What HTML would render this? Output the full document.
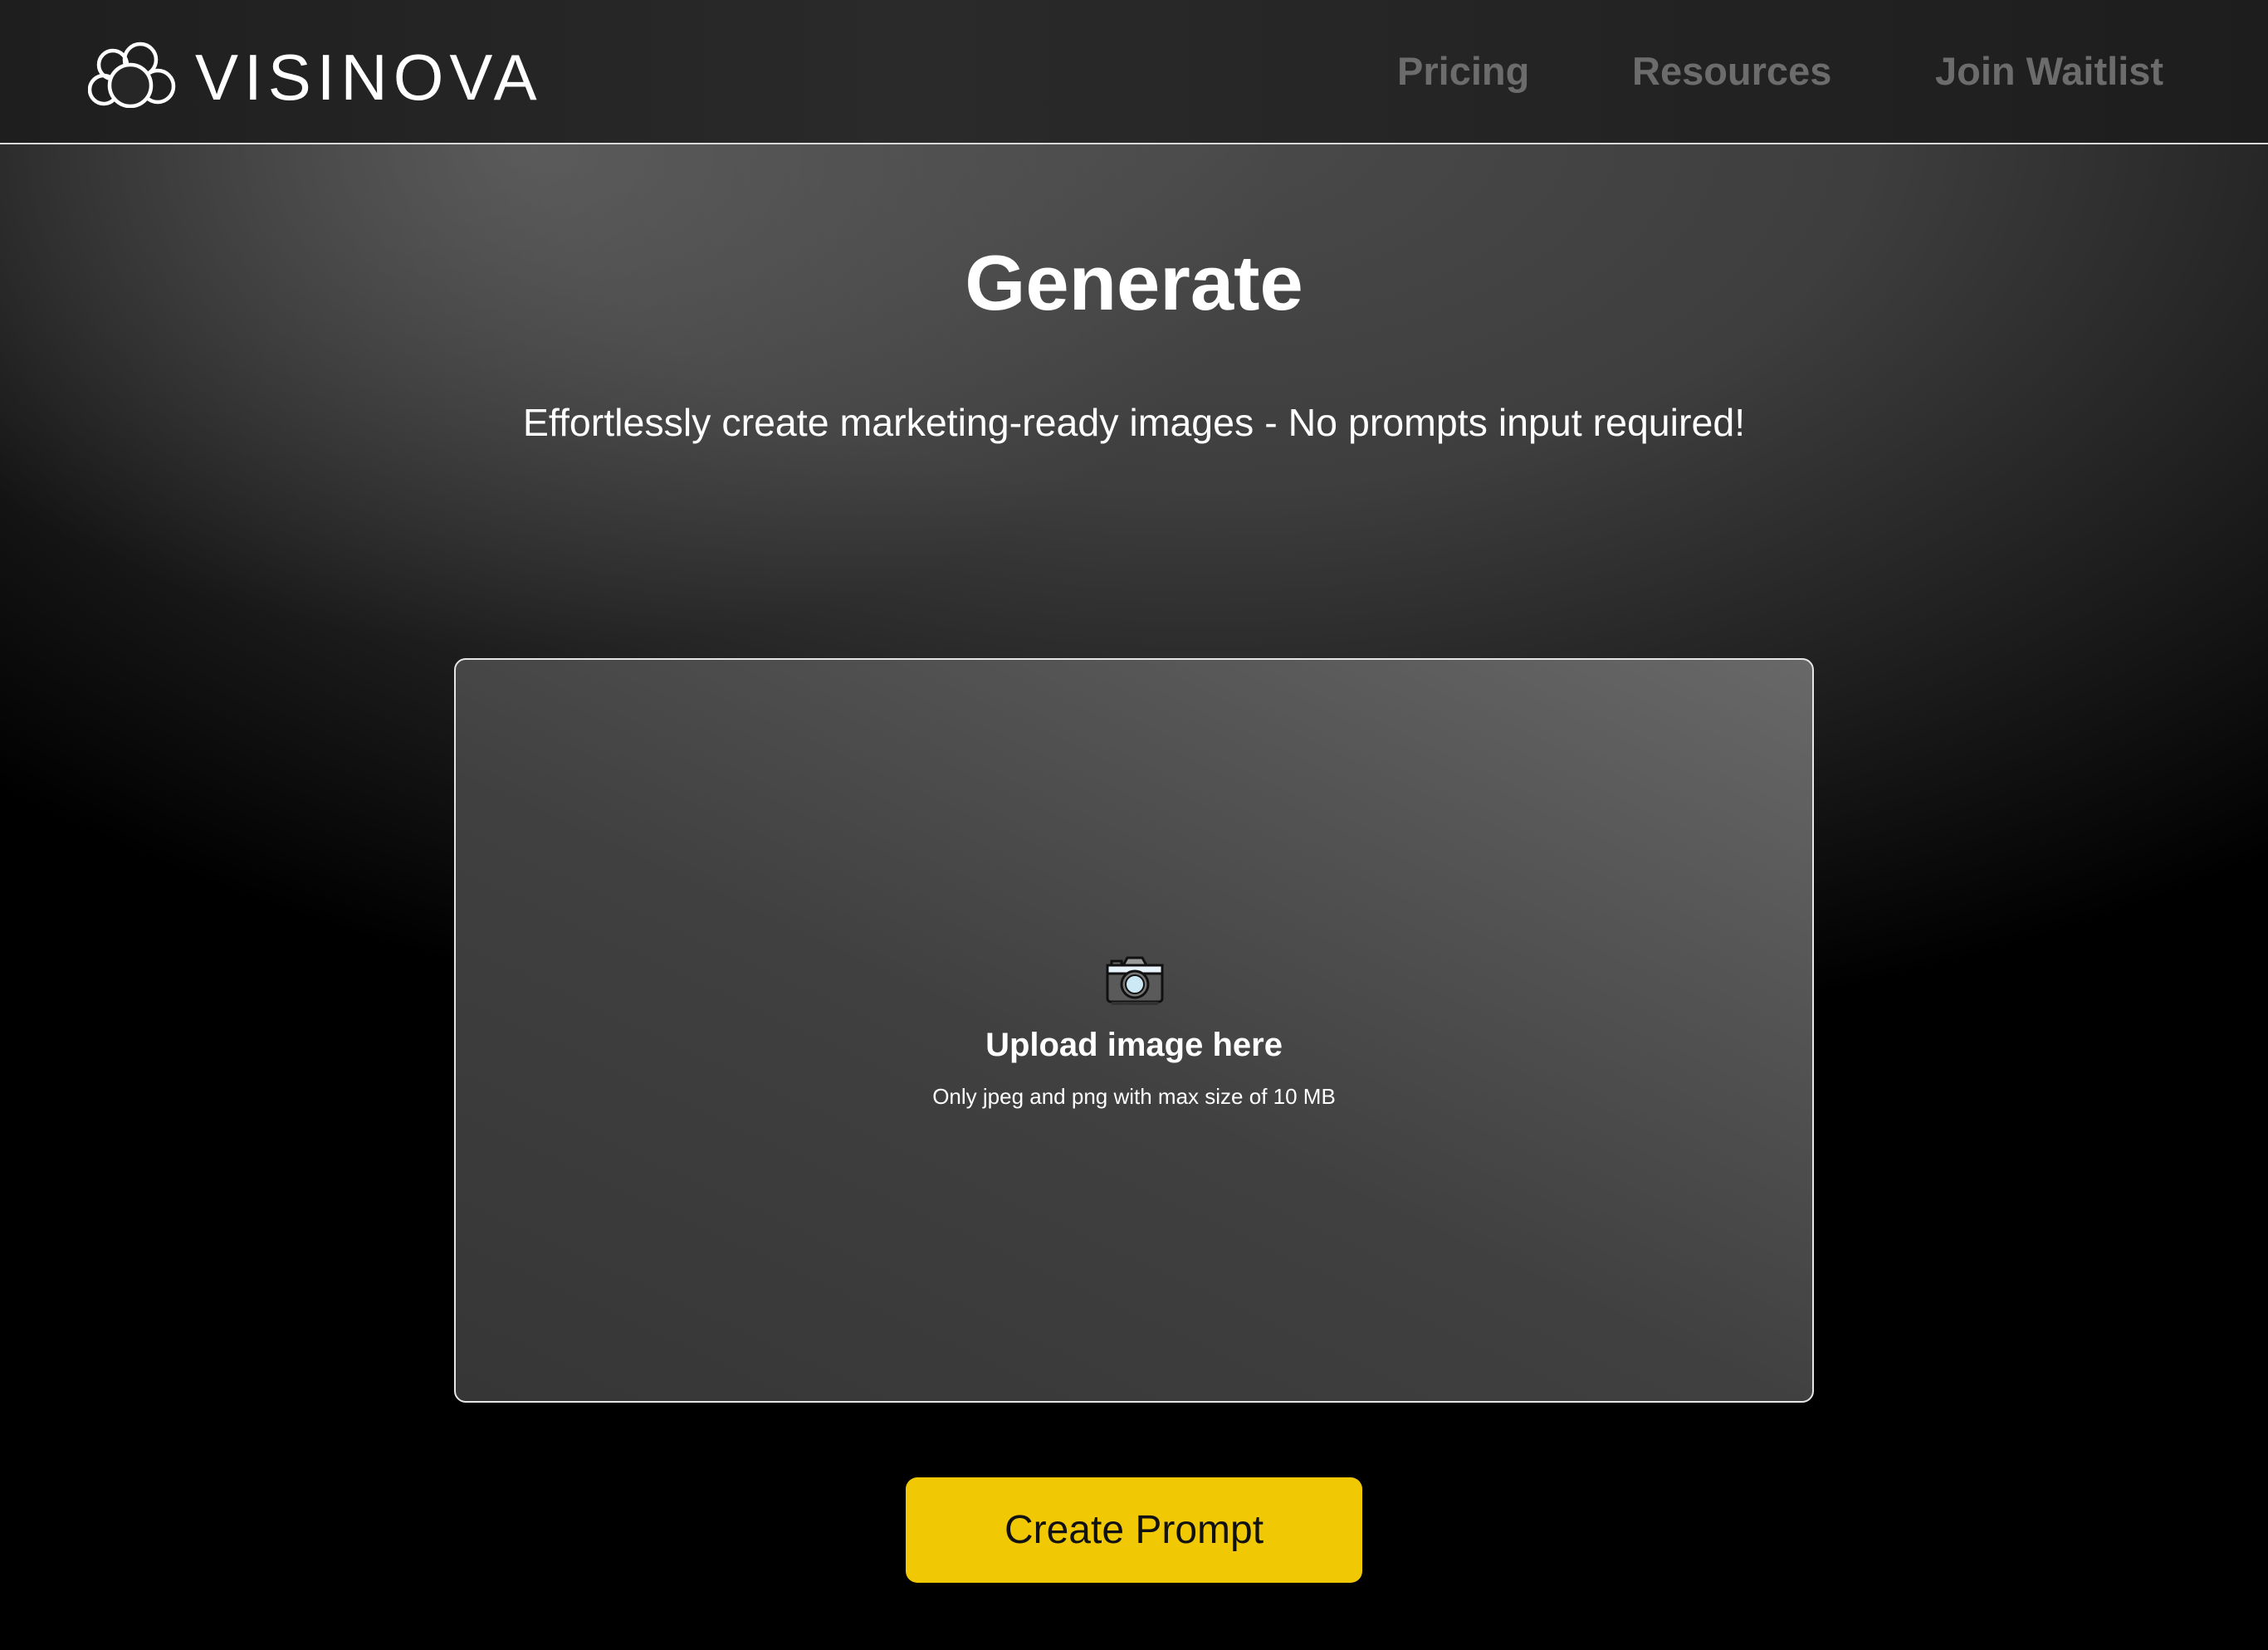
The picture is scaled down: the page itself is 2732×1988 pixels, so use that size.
<!DOCTYPE html>
<html><head><meta charset="utf-8"><style>
html,body{margin:0;padding:0;}
body{width:2732px;height:1988px;position:relative;overflow:hidden;font-family:"Liberation Sans",sans-serif;background:#000;}
.bg1{position:absolute;left:0;top:0;width:2732px;height:1988px;background:radial-gradient(ellipse 2300px 1250px at 1450px 150px,#4a4a4a 0%,#3e3e3e 35%,#1c1c1c 65%,#000 90%);}
.bg2{position:absolute;left:0;top:0;width:2732px;height:1988px;background:radial-gradient(ellipse 900px 600px at 640px 180px,rgba(110,110,110,.6),rgba(0,0,0,0) 100%);}
header{position:absolute;left:0;top:0;width:2732px;height:174px;background:linear-gradient(90deg,#1e1e1e,#2a2a2a 40%,#1d1d1d);border-bottom:2px solid #d8d8d8;box-sizing:border-box;}
.logo{position:absolute;left:235px;top:48px;color:#fff;font-size:78px;letter-spacing:7px;font-weight:normal;}
.nav{position:absolute;top:58px;color:#6c6c6c;font-weight:bold;font-size:47px;}
h1{position:absolute;left:0;width:2732px;top:287px;margin:0;text-align:center;color:#fff;font-size:94px;font-weight:bold;}
.sub{position:absolute;left:0;width:2732px;top:482px;text-align:center;color:#fff;font-size:46.5px;}
.box{position:absolute;left:547px;top:793px;width:1638px;height:897px;box-sizing:border-box;border:2px solid #e6e6e6;border-radius:14px;
background:linear-gradient(205deg,#686868 0%,#555 25%,#404040 55%,#363636 100%);}
.up{position:absolute;left:0;width:100%;text-align:center;color:#fff;}
.btn{position:absolute;left:1091px;top:1780px;width:550px;height:127px;background:#f0c904;border-radius:14px;text-align:center;line-height:127px;font-size:48px;color:#111;}
</style></head><body>
<div class="bg1"></div><div class="bg2"></div>
<header>
<svg style="position:absolute;left:106px;top:50px" width="106" height="80" viewBox="0 0 106 80" fill="none" stroke="#fff" stroke-width="4.5">
<circle cx="19" cy="58" r="17"/>
<circle cx="30" cy="28" r="17"/>
<circle cx="63" cy="22" r="19"/>
<circle cx="84" cy="54" r="19"/>
<circle cx="51" cy="53" r="25" fill="#262626"/>
</svg>
<div class="logo">VISINOVA</div>
<div class="nav" style="left:1683px">Pricing</div>
<div class="nav" style="left:1966px">Resources</div>
<div class="nav" style="left:2331px">Join Waitlist</div>
</header>
<h1>Generate</h1>
<div class="sub">Effortlessly create marketing-ready images - No prompts input required!</div>
<div class="box">
<svg style="position:absolute;left:782px;top:356px" width="72" height="62" viewBox="0 0 72 62">
<path d="M22 12 L27 3 H45 L50 12 Z" fill="#9a9a9a" stroke="#111" stroke-width="3"/>
<rect x="8" y="7" width="12" height="6" fill="#666" stroke="#111" stroke-width="3"/>
<rect x="3" y="12" width="66" height="44" rx="4" fill="#5a5a5a" stroke="#111" stroke-width="3"/>
<rect x="3" y="12" width="66" height="10" fill="#e8f4fb" stroke="#111" stroke-width="3"/>
<rect x="8" y="56" width="56" height="4" fill="#333"/>
<circle cx="36" cy="35" r="16" fill="#777" stroke="#111" stroke-width="3"/>
<circle cx="36" cy="35" r="11" fill="#cde9f5" stroke="#111" stroke-width="2"/>
</svg>
<div class="up" style="top:442px;font-size:40px;font-weight:bold">Upload image here</div>
<div class="up" style="top:511px;font-size:26px">Only jpeg and png with max size of 10 MB</div>
</div>
<div class="btn">Create Prompt</div>
</body></html>
